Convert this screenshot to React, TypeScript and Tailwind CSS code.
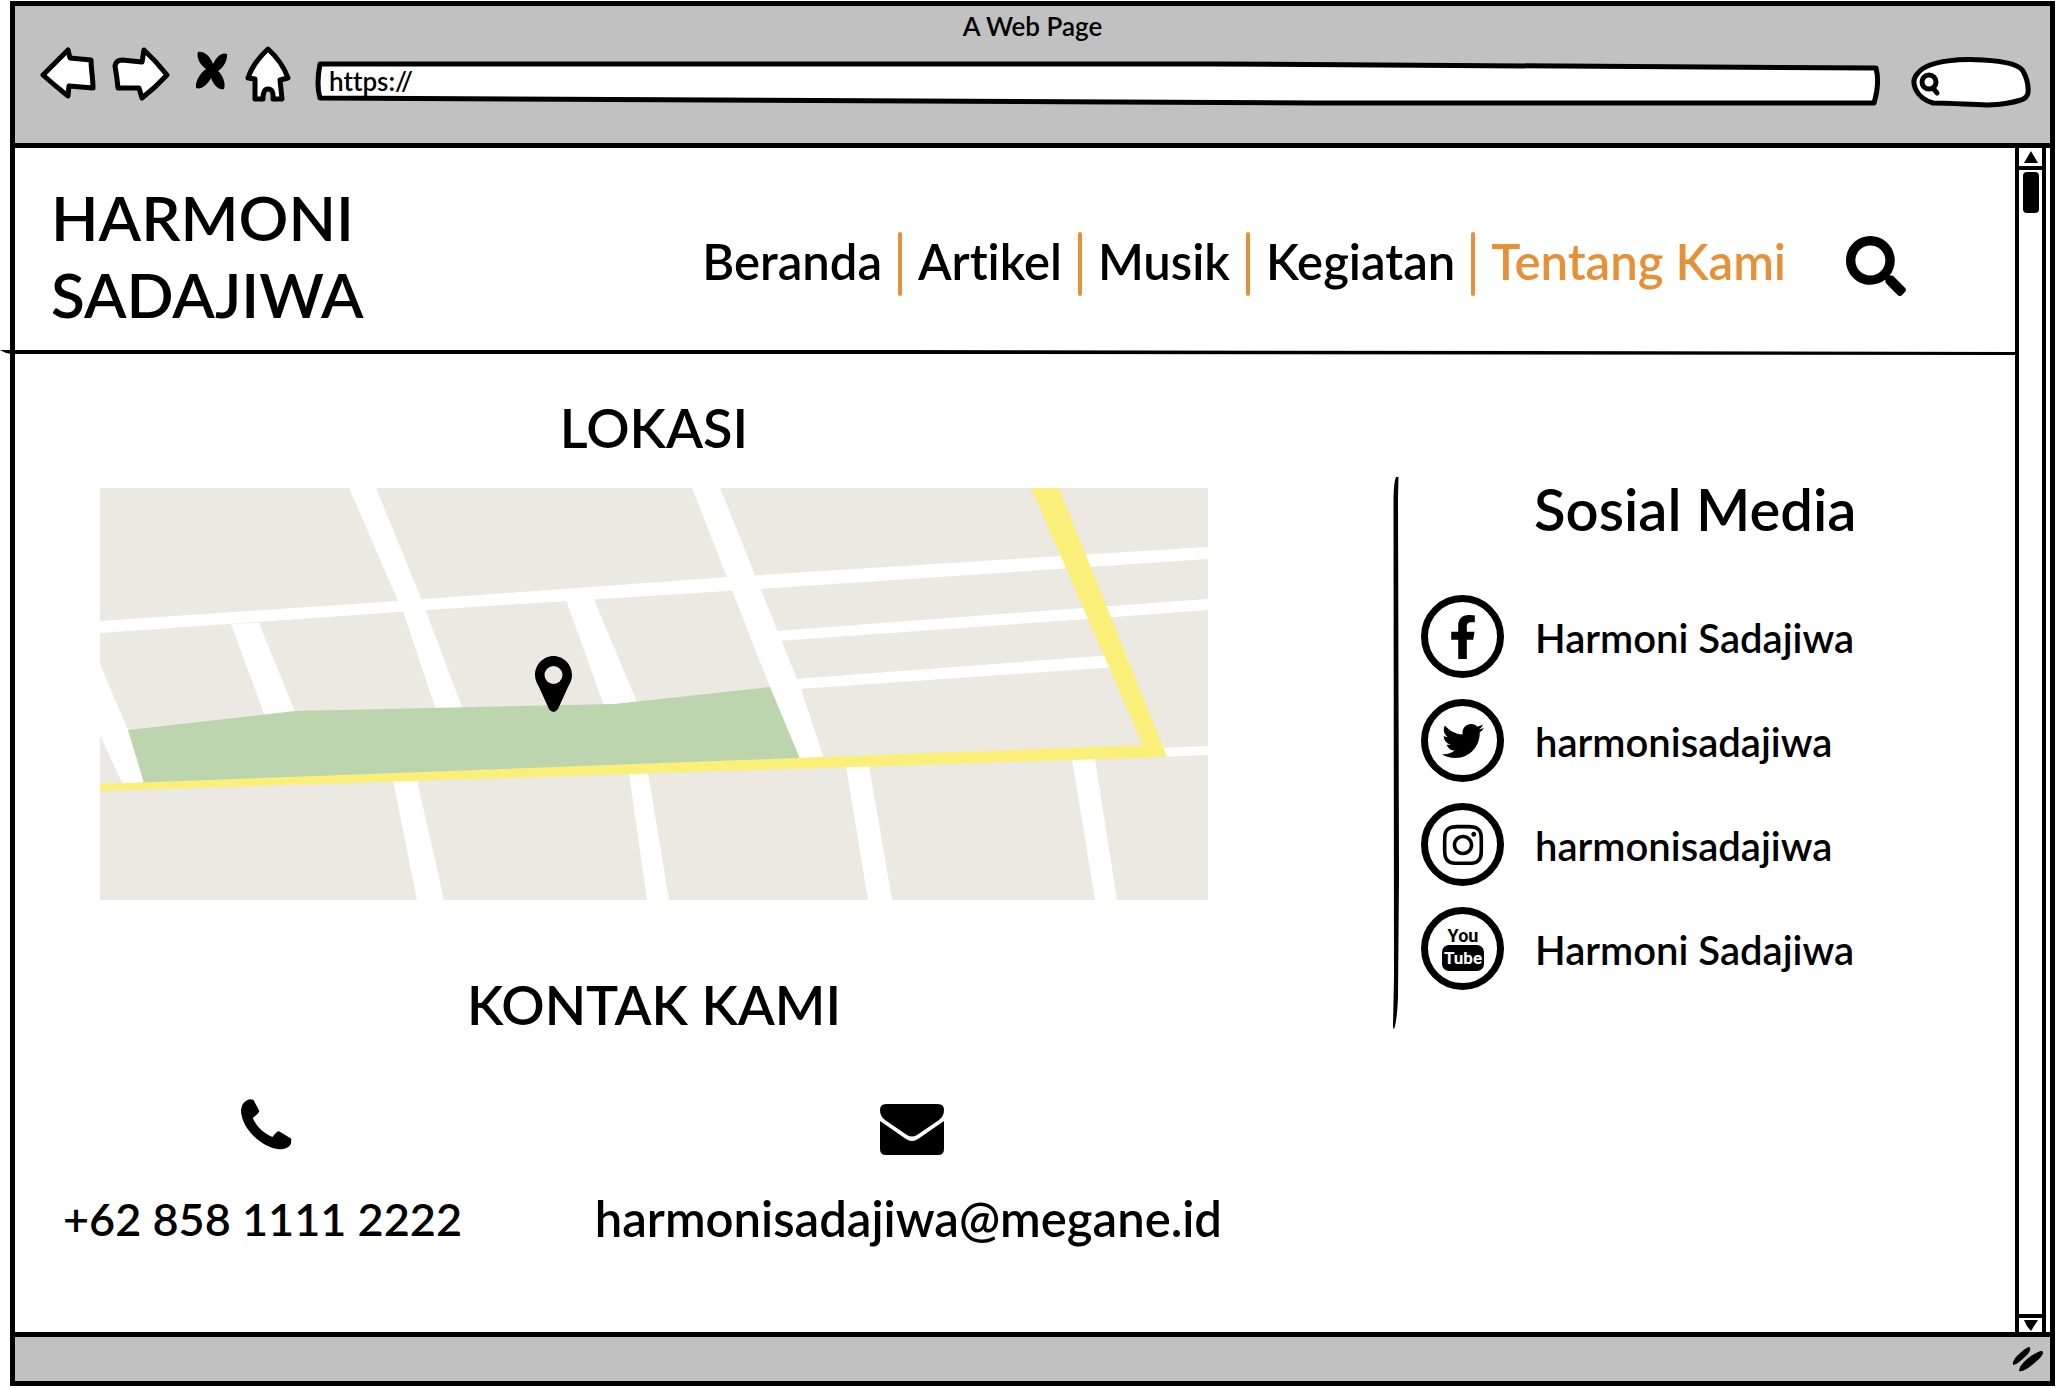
import React from "react";
import { FaFacebookF, FaInstagram, FaSearch, FaTwitter } from "react-icons/fa";

const navItems = ["Beranda", "Artikel", "Musik", "Kegiatan", "Tentang Kami"];

function BackIcon() {
  return (
    <svg viewBox="0 0 56 56" className="h-14 w-14" fill="#fff" stroke="#000" strokeWidth="5" strokeLinejoin="round">
      <path d="M3 30 L28 5 L30 13 L51 15 C51 24 53 33 53 43 L29 41 L28 51 Q14 40 3 30Z" />
    </svg>
  );
}

function ForwardIcon() {
  return (
    <svg viewBox="0 0 58 56" className="h-14 w-[58px]" fill="#fff" stroke="#000" strokeWidth="5" strokeLinejoin="round">
      <path d="M3 21 Q4 15 10 15 L30 17 L32 5 Q44 16 55 30 Q44 42 30 53 L27 43 L6 43 Q5 32 3 21Z" />
    </svg>
  );
}

function StopIcon() {
  return (
    <svg viewBox="0 0 34 40" className="h-10 w-[34px]" fill="#000">
      <path d="M3 1 C9 0 15 5 18 13 C22 5 27 1 32 3 C33 9 28 17 23 20 C28 24 31 33 29 38 C24 40 18 33 16 27 C12 34 6 39 1 37 C0 31 5 22 11 18 C5 14 1 6 3 1Z" />
    </svg>
  );
}

function HomeIcon() {
  return (
    <svg viewBox="0 0 46 58" className="h-[58px] w-[46px]" fill="#fff" stroke="#000" strokeWidth="5" strokeLinejoin="round">
      <path d="M23 4 C33 13 39 22 43 33 L35 35 L37 54 L28 54 Q29 44 23 44 Q18 44 18 54 L10 54 L10 34 L3 33 Q8 18 23 4Z" />
    </svg>
  );
}

function BrowserBar() {
  return (
    <header className="h-[142px] border-b-[5px] border-black bg-[#c1c1c1]">
      <p className="pt-0.5 text-center text-[26px] leading-9 font-semibold">A Web Page</p>
      <div className="flex items-start pt-px pr-[19px] pl-[25px]">
        <button aria-label="Kembali"><BackIcon /></button>
        <button aria-label="Maju" className="ml-4"><ForwardIcon /></button>
        <button aria-label="Hentikan" className="mt-1.5 ml-[25px]"><StopIcon /></button>
        <button aria-label="Halaman utama" className="ml-4"><HomeIcon /></button>
        <div className="relative mt-4 ml-6 h-12 flex-1">
          <svg viewBox="0 0 1566 48" preserveAspectRatio="none" className="absolute inset-0 h-full w-full" fill="#fff" stroke="#000" strokeWidth="5" strokeLinejoin="round">
            <path d="M5 3 L900 3 L1561 7 Q1565 22 1559 42 L1000 42 L5 37 Q1 24 5 3Z" />
          </svg>
          <input aria-label="Alamat" defaultValue="https://" className="relative h-10 w-full bg-transparent px-3.5 text-[26px] font-semibold outline-none" />
        </div>
        <div className="relative mt-3 ml-[30px] h-[52px] w-[120px]">
          <svg viewBox="0 0 120 52" className="absolute inset-0 h-full w-full" fill="#fff" stroke="#000" strokeWidth="5" strokeLinecap="round">
            <path d="M22 46 C5 41 -2 25 7 16 C18 2 55 2 72 3 C90 4 108 7 112 14 Q118 25 117 36 Q116 41 110 43 C80 52 60 46 22 46Z" />
            <circle cx="18" cy="25" r="7" />
            <path d="M22 31 L26 36" />
          </svg>
          <input aria-label="Cari di web" className="relative h-full w-full bg-transparent pr-3 pl-9 text-xl outline-none" />
        </div>
      </div>
    </header>
  );
}

function SiteHeader() {
  return (
    <div className="flex h-[202px] items-center pt-3.5 pr-[109px] pl-9">
      <h1 className="w-96 text-[62px] leading-[77px] font-semibold">HARMONI SADAJIWA</h1>
      <nav className="ml-auto flex items-center pt-4">
        {navItems.map((item, i) => (
          <React.Fragment key={item}>
            {i > 0 && <span className="mx-4 h-16 w-1 rounded-full bg-[#e69138]" />}
            <a href="#" className={i === 4 ? "pb-1.5 text-[49px] leading-[64px] font-semibold text-[#e69138]" : "pb-1.5 text-[49px] leading-[64px] font-semibold"}>
              {item}
            </a>
          </React.Fragment>
        ))}
      </nav>
      <button aria-label="Cari" className="ml-[60px] pt-5">
        <FaSearch className="h-[60px] w-[60px]" />
      </button>
    </div>
  );
}

function LocationMap() {
  return (
    <svg viewBox="0 0 1108 412" className="h-auto w-full" role="img" aria-label="Peta lokasi">
      <rect width="1108" height="412" fill="#ebe9e1" />
      <g fill="#fff">
        <path d="M249 0H276L321 110L362 219V222H336L304 126L298 113Z" />
        <path d="M0 133L298 113L628 89L961 68L1108 59V71L660 101L326 122L0 145Z" />
        <path d="M131 136L159 135L195 224L165 228Z" />
        <path d="M466 112L493 109L537 214L504 218Z" />
        <path d="M0 176L28 242L44 294L23 297L0 247Z" />
        <path d="M592 0H620L697 191L701 201L724 271H700L670 199Z" />
        <path d="M676 143L983 120L1108 111V122L987 131L677 153Z" />
        <path d="M695 191L1026 166L1031 178L699 201Z" />
        <path d="M1060 260L1108 258V267L1060 269Z" />
        <path d="M293 292H317L344 412H317Z" />
        <path d="M529 285H548L569 412H547Z" />
        <path d="M746 278H769L792 412H768Z" />
        <path d="M972 271H995L1017 412H995Z" />
      </g>
      <path d="M28 242L195 223L514 216L670 199L700 271L44 295Z" fill="#bcd5ae" />
      <path d="M0 296L1043 257L931 0H959L1067 269L0 303Z" fill="#faef78" />
      <path d="M453.500 168C443 168 435 177 435 187C435 192 437 195 439 199L449 221Q453.500 227 458 221L468 199C470 195 472 192 472 187C472 177 464 168 453.500 168Z" />
      <circle cx="453.500" cy="187" r="9" fill="#ebe9e1" />
    </svg>
  );
}

function PhoneIcon() {
  return (
    <svg viewBox="-8 0 59 51" className="h-[51px] w-[59px]">
      <path d="M5 2 Q8 -1 12.500 1 L18.400 12 Q18 14 11.800 19 C15 27 22 34 31.400 38 Q36 32 38 32.300 L50 39.500 Q52 50 38 50.300 C22 49 0 30 0 11 Q1 4 5 2Z" />
    </svg>
  );
}

function MailIcon() {
  return (
    <svg viewBox="-8 0 72 51" className="h-[51px] w-[72px]">
      <path d="M6 0H58Q64 0 64 6Q64 12 59 16L37 31Q32 34 27 31L5 16Q0 12 0 6Q0 0 6 0Z" />
      <path d="M0 17L26 35Q32 39 38 35L64 17V45Q64 51 58 51H6Q0 51 0 45Z" />
    </svg>
  );
}

function YouTubeIcon() {
  return (
    <svg viewBox="0 0 42 54" className="h-[54px] w-[42px]">
      <text x="21" y="20" textAnchor="middle" className="font-['Roboto',sans-serif] text-[18px] leading-none font-bold">You</text>
      <rect x="0" y="23" width="42" height="26" rx="7" />
      <text x="21" y="42" textAnchor="middle" fill="#fff" className="font-['Roboto',sans-serif] text-[17px] leading-none font-bold">Tube</text>
    </svg>
  );
}

const socials = [
  { label: "Harmoni Sadajiwa", icon: <FaFacebookF className="h-11 w-[30px]" /> },
  { label: "harmonisadajiwa", icon: <FaTwitter className="h-[42px] w-[42px]" /> },
  { label: "harmonisadajiwa", icon: <FaInstagram className="h-[46px] w-[46px]" /> },
  { label: "Harmoni Sadajiwa", icon: <YouTubeIcon /> },
];

function SocialMedia() {
  return (
    <aside className="relative mt-[121px] h-[552px] pl-7">
      <svg viewBox="0 0 6 552" preserveAspectRatio="none" className="absolute top-0 left-0 h-full w-1.5">
        <path d="M3 0H5.500L5 20L6 400L5 520Q4 545 1 552Q0 552 0 548L1 500L0.500 20Q1 4 3 0Z" />
      </svg>
      <h2 className="pl-[113px] text-[58px] leading-[64px] font-semibold">Sosial Media</h2>
      <ul className="mt-[54px] flex flex-col gap-[21px]">
        {socials.map((s, i) => (
          <li key={i}>
            <a href="#" className="flex items-center gap-[31px]">
              <span className="flex h-[83px] w-[83px] shrink-0 items-center justify-center rounded-full border-[7px] border-black">{s.icon}</span>
              <span className="pt-0.5 text-[40px] leading-[48px] font-semibold">{s.label}</span>
            </a>
          </li>
        ))}
      </ul>
    </aside>
  );
}

function Scrollbar() {
  return (
    <div className="mr-1 flex w-[31px] shrink-0 flex-col border-x-4 border-black">
      <button aria-label="Gulir ke atas" className="flex h-[22px] items-center justify-center border-b-4 border-black">
        <svg viewBox="0 0 14 12" className="h-3 w-3.5"><path d="M7 0L14 12H0Z" /></svg>
      </button>
      <div className="mx-auto mt-0.5 h-[41px] w-4 rounded-sm bg-black" />
      <button aria-label="Gulir ke bawah" className="mt-auto flex h-[18px] items-center justify-center border-t-4 border-black">
        <svg viewBox="0 0 14 12" className="h-3 w-3.5"><path d="M0 1H14Q10 7 7 12Q2 7 0 1Z" /></svg>
      </button>
    </div>
  );
}

export default function App() {
  return (
    <div className="flex min-h-screen flex-col bg-white pt-px pr-px pb-0.5 pl-2.5 font-['Lato',sans-serif] text-black [font-variant-ligatures:none]">
      <div className="flex flex-1 flex-col border-[5px] border-black">
        <BrowserBar />
        <div className="flex flex-1">
          <div className="min-w-0 flex-1">
            <SiteHeader />
            <svg viewBox="0 0 2015 6" preserveAspectRatio="none" className="-ml-[15px] h-1.5 w-[calc(100%+15px)]">
              <path d="M0 0L12 0L900 0L2015 2V5L1000 4L12 4L6 3Z" />
            </svg>
            <main className="grid grid-cols-[minmax(0,1fr)_622px]">
              <div>
                <section className="pr-[185px] pl-[85px]">
                  <h2 className="pt-[37px] text-center text-[54px] leading-[70px] font-semibold">LOKASI</h2>
                  <div className="mt-[25px]"><LocationMap /></div>
                </section>
                <section>
                  <h2 className="mt-[70px] pr-[185px] pl-[85px] text-center text-[54px] leading-[70px] font-semibold">KONTAK KAMI</h2>
                  <div className="mt-[59px] flex justify-between pr-[171px] pl-12">
                    <div className="flex flex-col items-center">
                      <PhoneIcon />
                      <a href="tel:+6285811112222" className="mt-10 text-[45px] leading-[58px] font-semibold">+62 858 1111 2222</a>
                    </div>
                    <div className="flex flex-col items-center pt-[5px]">
                      <MailIcon />
                      <a href="mailto:harmonisadajiwa@megane.id" className="mt-[34px] text-[49px] leading-[58px] font-semibold">harmonisadajiwa@megane.id</a>
                    </div>
                  </div>
                </section>
              </div>
              <SocialMedia />
            </main>
          </div>
          <Scrollbar />
        </div>
        <footer className="flex h-[49px] items-center justify-end border-t-[5px] border-black bg-[#c1c1c1] pr-1.5">
          <svg viewBox="0 0 32 26" className="h-[26px] w-8">
            <path d="M1 19Q0 16 4 11Q14 1 17 1Q20 2 16 8Q4 20 1 19Z" />
            <path d="M7 25Q7 20 15 13Q27 4 30 5Q33 7 27 13Q12 27 7 25Z" />
          </svg>
        </footer>
      </div>
    </div>
  );
}
